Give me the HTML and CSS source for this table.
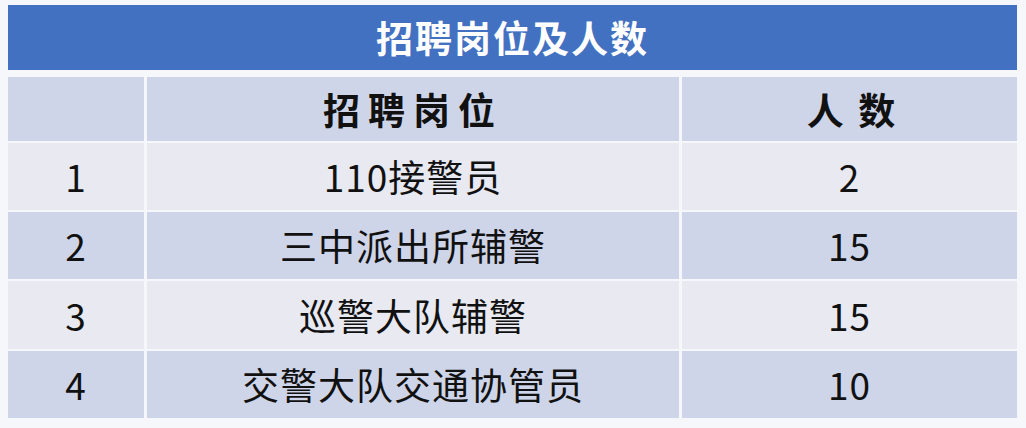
FILE: index.html
```html
<!DOCTYPE html>
<html lang="zh-CN">
<head>
<meta charset="utf-8">
<title>招聘岗位及人数</title>
<link rel="stylesheet" href="styles.css">
</head>
<body>
<div class="page">
  <div class="title">招聘岗位及人数</div>
  <div class="table">
    <div class="cell head"></div>
    <div class="cell head wide">招聘岗位</div>
    <div class="cell head narrow">人 数</div>

    <div class="cell light">1</div>
    <div class="cell light">110接警员</div>
    <div class="cell light">2</div>

    <div class="cell dark">2</div>
    <div class="cell dark">三中派出所辅警</div>
    <div class="cell dark">15</div>

    <div class="cell light">3</div>
    <div class="cell light">巡警大队辅警</div>
    <div class="cell light">15</div>

    <div class="cell dark">4</div>
    <div class="cell dark">交警大队交通协管员</div>
    <div class="cell dark">10</div>
  </div>
</div>
</body>
</html>
```

FILE: styles.css
```css
html, body {
  margin: 0;
  padding: 0;
  background: #f6f7fa;
}
body {
  font-family: "Noto Sans CJK SC", "Noto Sans", sans-serif;
  color: #111;
}
.page {
  width: 1009px;
  padding: 5px 9px 10px 8px;
}
.title {
  height: 65px;
  background: #4371c2;
  color: #fff;
  font-weight: 700;
  font-size: 37px;
  letter-spacing: 2px;
  display: flex;
  align-items: center;
  justify-content: center;
  line-height: 1;
}
.table {
  margin-top: 7px;
  display: grid;
  grid-template-columns: 136px 532px 335px;
  grid-template-rows: 64px 67px 67px 68px 67px;
  column-gap: 3px;
  row-gap: 2px;
}
.cell {
  display: flex;
  align-items: center;
  justify-content: center;
  font-size: 37px;
  line-height: 1;
  letter-spacing: 1px;
}
.head {
  background: #cfd5e8;
  font-weight: 700;
}
.head.wide {
  letter-spacing: 8px;
}
.head.narrow {
  letter-spacing: 3px;
  padding-left: 6px;
}
.light {
  background: #e8e9f1;
}
.dark {
  background: #cfd5e8;
}
```
